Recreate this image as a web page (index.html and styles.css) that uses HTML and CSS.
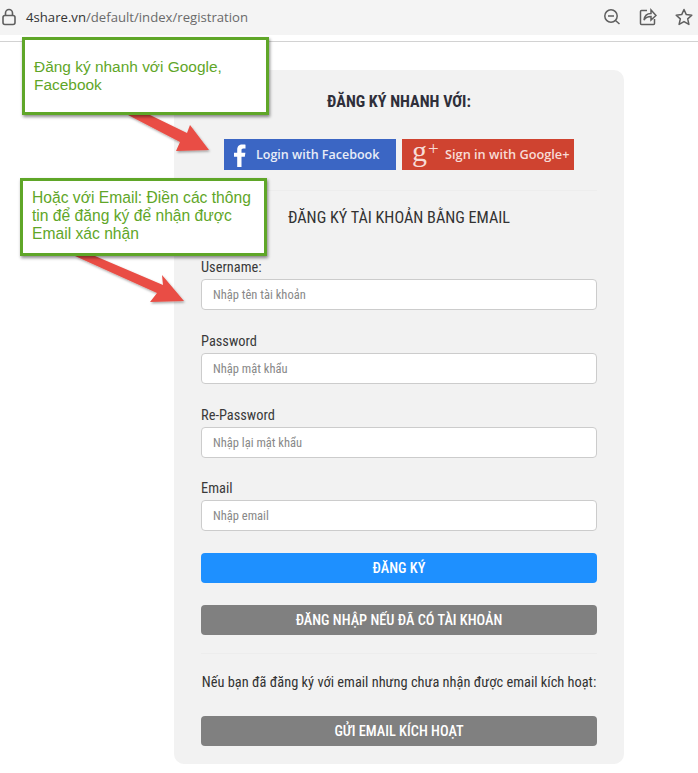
FILE: index.html
```html
<!DOCTYPE html>
<html lang="vi">
<head>
<meta charset="utf-8">
<title>4share.vn - Đăng ký</title>
<link rel="stylesheet" href="styles.css">
</head>
<body>
<header class="toolbar">
  <svg class="lock" width="16" height="18" viewBox="0 0 16 18" fill="none" stroke="#5f5f5f" stroke-width="1.6"><rect x="2" y="7.5" width="12" height="9" rx="2"/><path d="M4.5 7.5V5a3.5 3.5 0 0 1 7 0v2.5"/></svg>
  <div class="url"><span class="domain">4share.vn</span>/default/index/registration</div>
  <div class="tools">
    <svg width="18" height="18" viewBox="0 0 18 18" fill="none" stroke="#5f5f5f" stroke-width="1.5"><circle cx="8" cy="8" r="6.2"/><path d="M5 8h6M12.5 12.5l4 3.5"/></svg>
    <svg width="18" height="18" viewBox="0 0 18 18" fill="none" stroke="#5f5f5f" stroke-width="1.5"><path d="M8 2.5H2.5a1 1 0 0 0-1 1v12a1 1 0 0 0 1 1h12a1 1 0 0 0 1-1V11"/><path d="M5 12c.5-4 3-6.500 7-6.500V2l5 5.500-5 4.500V8.500c-3 0-5.500 1-7 3.500z"/></svg>
    <svg width="18" height="18" viewBox="0 0 18 18" fill="none" stroke="#5f5f5f" stroke-width="1.5" stroke-linejoin="round"><path d="M9 1.500l2.300 5.100 5.500.6-4.100 3.700 1.200 5.500L9 13.600l-4.900 2.800 1.200-5.500L1.200 7.200l5.500-.6z"/></svg>
  </div>
</header>

<main class="card">
  <h2 class="quick-title">ĐĂNG KÝ NHANH VỚI:</h2>
  <div class="social">
    <a class="social-btn fb">
      <svg class="fb-icon" width="12" height="23" viewBox="0 0 12 24" preserveAspectRatio="none"><path fill="#fff" d="M3.200 24V13.300H0V9h3.200V6C3.200 2.200 5.200.5 8.300.5c1.300 0 2.700.1 3.200.2v3.900H9.400c-1.500 0-1.900.8-1.900 1.900V9h3.900l-.6 4.300H7.500V24z"/></svg>
      <span>Login with Facebook</span>
    </a>
    <a class="social-btn gp">
      <span class="gp-mark">g<sup>+</sup></span>
      <span class="gp-label">Sign in with Google+</span>
    </a>
  </div>
  <hr class="rule rule-top">
  <h3 class="email-title">ĐĂNG KÝ TÀI KHOẢN BẰNG EMAIL</h3>
  <form class="form">
    <label class="field"><span>Username:</span><input type="text" placeholder="Nhập tên tài khoản"></label>
    <label class="field"><span>Password</span><input type="password" placeholder="Nhập mật khẩu"></label>
    <label class="field"><span>Re-Password</span><input type="password" placeholder="Nhập lại mật khẩu"></label>
    <label class="field"><span>Email</span><input type="text" placeholder="Nhập email"></label>
    <button type="button" class="btn primary">ĐĂNG KÝ</button>
    <button type="button" class="btn muted">ĐĂNG NHẬP NẾU ĐÃ CÓ TÀI KHOẢN</button>
  </form>
  <hr class="rule rule-bottom">
  <p class="note">Nếu bạn đã đăng ký với email nhưng chưa nhận được email kích hoạt:</p>
  <button type="button" class="btn muted">GỬI EMAIL KÍCH HOẠT</button>
</main>

<svg class="arrows" width="698" height="773" viewBox="0 0 698 773">
  <defs><filter id="s" x="-20%" y="-20%" width="140%" height="140%"><feDropShadow dx="1" dy="1.500" stdDeviation="1.200" flood-color="#000" flood-opacity=".35"/></filter></defs>
  <path filter="url(#s)" fill="#e94e45" d="M128 115H150L187 133 190 125 209 150 176 151 180 142Z"/>
  <path filter="url(#s)" fill="#e94e45" d="M75 256H95L163 285 162 275 184 301 150 302 157 293Z"/>
</svg>
<div class="callout callout-one">Đăng ký nhanh với Google, Facebook</div>
<div class="callout callout-two">Hoặc với Email: Điền các thông tin để đăng ký để nhận được Email xác nhận</div>
</body>
</html>
```

FILE: styles.css
```css
* { box-sizing: border-box; }
html, body { margin: 0; padding: 0; }
body {
  position: relative;
  width: 698px;
  height: 773px;
  overflow: hidden;
  background: #fff;
  font-family: Roboto, "Liberation Sans", sans-serif;
  font-stretch: 75%;
  color: #333;
}
.toolbar {
  height: 42px;
  padding: 0 0 7px 1px;
  display: flex;
  align-items: center;
  background: #f4f4f4;
  border-bottom: 1px solid #d2d2d2;
  box-shadow: inset 0 -6px 0 #fff;
}
.lock { flex: none; }
.url {
  margin-left: 9px;
  font: 13.150px/18px "Open Sans", "Liberation Sans", sans-serif;
  color: #6a6a6a;
  flex: 1;
}
.domain { color: #333; }
.tools { display: flex; gap: 18px; margin-right: 5px; }
.card {
  width: 450px;
  height: 694px;
  margin: 28px 0 0 174px;
  padding: 21px 27px 0;
  background: #f2f2f2;
  border-radius: 10px;
}
.quick-title {
  margin: 0;
  font-size: 16.100px;
  line-height: 22px;
  font-weight: 700;
  text-align: center;
  color: #2f2f3a;
}
.social {
  display: flex;
  justify-content: center;
  gap: 6px;
  margin-top: 26px;
}
.social-btn {
  width: 172px;
  height: 31px;
  display: flex;
  align-items: center;
  color: #e8edf7;
  font: 600 12.500px/31px "Open Sans", "Liberation Sans", sans-serif;
}
.fb { background: #3b66c4; padding-left: 10px; }
.fb-icon { margin-right: 10px; margin-top: 2px; }
.gp { background: #cf4330; padding-left: 10px; color: #f7dcd7; }
.gp-mark {
  width: 33px;
  font: 30px/24px "Liberation Serif", serif;
  color: #f7dcd7;
  margin-top: -7px;
  white-space: nowrap;
}
.gp-mark sup { font-size: 19px; line-height: 0; vertical-align: 6px; margin-left: 1px; }
.gp-label { font-size: 12.750px; }
.rule { margin: 0; border: 0; border-top: 1px solid #ededed; }
.rule-top { margin-top: 20px; }
.email-title {
  margin: 16px 0 0;
  font-size: 16.200px;
  line-height: 22px;
  font-weight: 400;
  text-align: center;
  color: #333;
}
.form { margin-top: 31px; display: flex; flex-direction: column; }
.field { display: flex; flex-direction: column; margin-bottom: 23.800px; }
.field:last-of-type { margin-bottom: 21.600px; }
.field span { font-size: 14.400px; line-height: 16px; margin-bottom: 3px; margin-top: 0; color: #3a3a3a; }
.field input {
  height: 31px;
  padding: 0 11px;
  border: 1px solid #ccc;
  border-radius: 4px;
  background: #fff;
  font: 12.500px Roboto, "Liberation Sans", sans-serif;
  font-stretch: 75%;
  color: #333;
}
.field input::placeholder { color: #888; opacity: 1; }
.btn {
  display: block;
  width: 100%;
  height: 30px;
  border: 0;
  border-radius: 4px;
  color: #fff;
  font: 500 14.350px/26px Roboto, "Liberation Sans", sans-serif;
  font-stretch: 75%;
  text-align: center;
  padding: 3px 0 0;
}
.primary { background: #1e90ff; }
.muted { background: #808080; }
.primary + .muted { margin-top: 22px; }
.rule-bottom { margin-top: 18px; }
.note {
  margin: 20px 0 24px;
  font-size: 14.400px;
  line-height: 18px;
  text-align: center;
  color: #333;
  white-space: nowrap;
}
.arrows { position: absolute; left: 0; top: 0; pointer-events: none; }
.callout {
  position: absolute;
  width: 247px;
  height: 78px;
  background: #fff;
  border: 3px solid #5fa628;
  box-shadow: 1px 2px 3px rgba(0, 0, 0, .45);
  font: 15.450px/18px "Liberation Sans", sans-serif;
  color: #5fa628;
}
.callout-one { left: 22px; top: 37px; padding: 18px 9px 0; }
.callout-two { left: 20px; top: 178px; padding: 8px 9px 0; font-size: 15.650px; }
```
